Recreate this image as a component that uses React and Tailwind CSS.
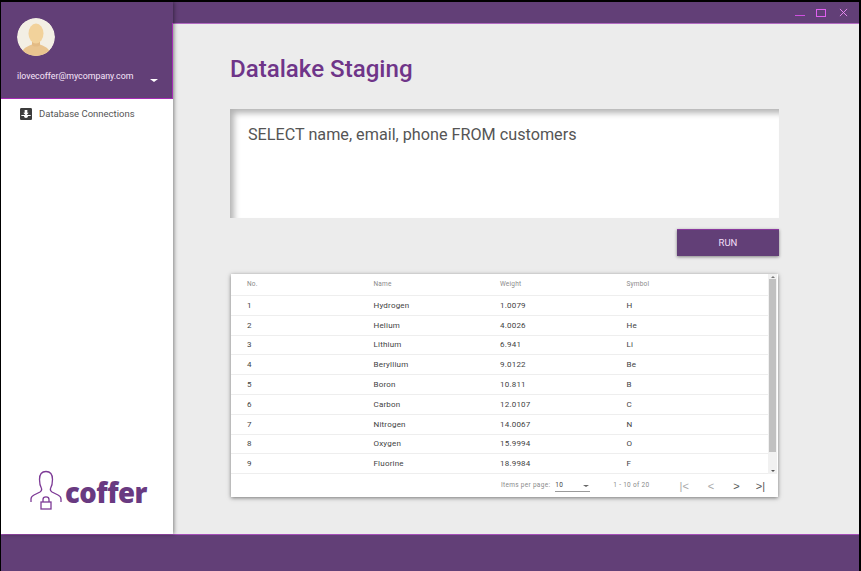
const elements = [
  { no: 1, name: 'Hydrogen', weight: '1.0079', symbol: 'H' },
  { no: 2, name: 'Helium', weight: '4.0026', symbol: 'He' },
  { no: 3, name: 'Lithium', weight: '6.941', symbol: 'Li' },
  { no: 4, name: 'Beryllium', weight: '9.0122', symbol: 'Be' },
  { no: 5, name: 'Boron', weight: '10.811', symbol: 'B' },
  { no: 6, name: 'Carbon', weight: '12.0107', symbol: 'C' },
  { no: 7, name: 'Nitrogen', weight: '14.0067', symbol: 'N' },
  { no: 8, name: 'Oxygen', weight: '15.9994', symbol: 'O' },
  { no: 9, name: 'Fluorine', weight: '18.9984', symbol: 'F' },
];

const Avatar = () => (
  <svg viewBox="0 0 38 38" className="w-[38px] h-[38px] rounded-full">
    <circle cx="19" cy="19" r="19" fill="#f3efe4" />
    <path d="M5 34c2-5 7-6 10-7.500h8c3 1.500 8 2.500 10 7.500a19 19 0 0 1-28 0z" fill="#e9c48f" />
    <path d="M15 22h8v5c-1 2-7 2-8 0z" fill="#e3bb85" />
    <ellipse cx="19" cy="15.500" rx="7.500" ry="10" fill="#f2d29b" />
  </svg>
);

const InboxIcon = () => (
  <svg viewBox="3 3 18 18" className="w-[12px] h-[12px]">
    <path d="M19 3H5c-1.100 0-2 .9-2 2v14c0 1.100.9 2 2 2h14c1.100 0 2-.9 2-2V5c0-1.100-.9-2-2-2z" fill="#3c3c3c" />
    <path d="M16 10h-2V6h-4v4H8l4 4.500 4-4.500zM5 15h4c0 1.700 1.300 3 3 3s3-1.300 3-3h4v-1.500H5z" fill="#fff" />
  </svg>
);

const CofferLogo = () => (
  <svg viewBox="0 0 32 40" className="w-[32px] h-[40px]" fill="none" stroke="#7d3a96" strokeWidth="1.300">
    <path d="M1 32v-3c0-2 1-3 3-4l6-3c1.500-1 2-2 1.500-3.500C10 16 9.500 13 9.500 9.500 9.500 4 12 1.500 16 1.500s6.500 2.500 6.500 8c0 3.500-.5 6.500-2 9-.5 1.500 0 2.500 1.500 3.500l6 3c2 1 3 2 3 4v3" />
    <rect x="11" y="32" width="10" height="7" />
    <path d="M13 32v-2.500c0-3.500 6-3.500 6 0V32" />
  </svg>
);

const App = () => (
  <div className="w-[861px] h-[571px] overflow-hidden bg-black pt-[2px] pl-[1px] pr-[2px] flex flex-col font-['Roboto',sans-serif]">
    <div className="flex flex-1 min-h-0">
      {/* Sidebar */}
      <div className="w-[172px] flex flex-col bg-white shadow-[1px_0_4px_rgba(0,0,0,0.45)] z-10">
        <div className="relative h-[97px] bg-[#623f77] border-b-[1px] border-[#a52cb5] pl-[16px] pt-[16px]">
          <span className="absolute top-[21px] bottom-0 right-0 w-[1px] bg-[#a52cb5]" />
          <Avatar />
          <div className="flex items-center mt-[14px]">
            <span className="text-[8.800px] leading-[12px] text-[#f8e6fb]">ilovecoffer@mycompany.com</span>
            <span className="ml-[17px] mt-[8px] w-0 h-0 border-x-[4px] border-x-transparent border-t-[3px] border-t-white" />
          </div>
        </div>
        <div className="flex items-center pl-[19px] pt-[9px] gap-[7px]">
          <InboxIcon />
          <span className="text-[9.500px] leading-[12px] text-[#555555]">Database Connections</span>
        </div>
        <div className="flex-1" />
        <div className="flex items-end pl-[29px] pb-[24px] gap-[3px]">
          <CofferLogo />
          <span className="text-[27.500px] leading-[34px] font-extrabold text-[#693a81] font-['Open_Sans',sans-serif] tracking-[-0.5px]">coffer</span>
        </div>
      </div>

      {/* Main */}
      <div className="flex-1 flex flex-col min-w-0">
        <div className="h-[22px] bg-[#623f77] border-b-[1px] border-[#b26ac2] flex items-center justify-end pr-[11px]">
          <span className="w-[10px] h-[1px] bg-[#d050e0] mt-[5px]" />
          <span className="w-[10px] h-[8px] border border-[#e060f0] ml-[11px]" />
          <svg viewBox="0 0 10 10" className="w-[9px] h-[9px] ml-[13px]" stroke="#f090f8" strokeWidth="1">
            <path d="M1 1l8 8M9 1l-8 8" />
          </svg>
        </div>
        <div className="flex-1 bg-[#ececec] pl-[57px] pr-[80px] flex flex-col">
          <h1 className="mt-[27px] text-[24.100px] leading-[36px] font-medium text-[#6f3589]">Datalake Staging</h1>
          <div className="mt-[22px] h-[109px] bg-white shadow-[inset_5px_5px_6px_-1px_rgba(0,0,0,0.3)] pl-[18px] pt-[16px] text-[16.200px] leading-[20px] text-[#555555]">
            SELECT name, email, phone FROM customers
          </div>
          <div className="flex justify-end mt-[11px]">
            <button className="w-[102px] h-[27px] bg-[#623f77] border-t border-[#8a3a9e] text-[9.500px] text-[#f4dff8] shadow-[0_1px_3px_rgba(0,0,0,0.45)]">
              RUN
            </button>
          </div>

          {/* Results */}
          <div className="mt-[18px] ml-[1px] mr-[1px] h-[223px] bg-white shadow-[0_1px_4px_rgba(0,0,0,0.5)] flex flex-col">
            <div className="flex h-[200px]">
              <div className="flex-1 overflow-hidden">
                <div className="grid grid-cols-[126.500px_126.500px_126.500px_1fr] pl-[16px] h-[22px] pt-[1px] items-center text-[6.500px] tracking-[0.2px] text-[#8a8a8a] border-b border-[#eeeeee]">
                  <span>No.</span>
                  <span>Name</span>
                  <span>Weight</span>
                  <span>Symbol</span>
                </div>
                {elements.map(el => (
                  <div
                    key={el.no}
                    className="grid grid-cols-[126.500px_126.500px_126.500px_1fr] pl-[16px] h-[19.800px] pt-[1px] items-center text-[8px] tracking-[0.2px] text-[#3f3f3f] border-b border-[#eeeeee]"
                  >
                    <span>{el.no}</span>
                    <span>{el.name}</span>
                    <span>{el.weight}</span>
                    <span>{el.symbol}</span>
                  </div>
                ))}
              </div>
              <div className="w-[9px] bg-[#f1f1f1] flex flex-col items-center pt-[2px] pb-[2px] mr-[1px]">
                <span className="w-0 h-0 border-x-[2px] border-x-transparent border-b-[2px] border-b-[#777777]" />
                <span className="w-[7px] h-[173px] bg-[#c1c1c1] mt-[1px]" />
                <span className="flex-1" />
                <span className="w-0 h-0 border-x-[2px] border-x-transparent border-t-[2px] border-t-[#555555]" />
              </div>
            </div>
            <div className="flex-1 flex items-center text-[6.500px] tracking-[0.3px] text-[#8a8a8a] pl-[270px] pt-[1px]">
              <span>Items per page:</span>
              <div className="ml-[5px] w-[35px] h-[11px] border-b border-[#9a9a9a] flex items-center justify-between pr-[1px] text-[#444444]">
                <span>10</span>
                <span className="w-0 h-0 border-x-[3.500px] border-x-transparent border-t-[2.500px] border-t-[#666666]" />
              </div>
              <span className="ml-[23px] whitespace-nowrap">1 - 10 of 20</span>
              <div className="flex-1 flex items-center justify-end pr-[13px] text-[11px] tracking-normal leading-[12px] gap-[16px] text-[#a8a8a8] font-['Liberation_Sans',sans-serif]">
                <span>|&lt;</span>
                <span className="ml-[3px]">&lt;</span>
                <span className="ml-[3px] text-[#555555]">&gt;</span>
                <span className="text-[#555555]">&gt;|</span>
              </div>
            </div>
          </div>
        </div>
      </div>
    </div>
    <div className="h-[37px] bg-[#623f77] border-t border-[#a54fb8]" />
  </div>
);

export default App;
